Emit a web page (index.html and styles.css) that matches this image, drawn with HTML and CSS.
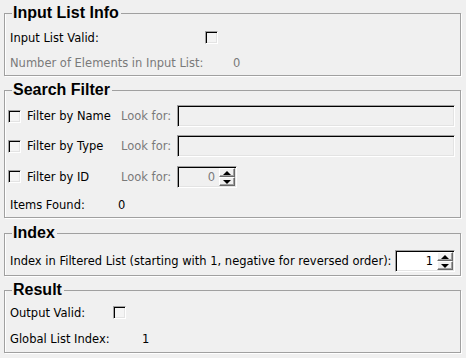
FILE: index.html
```html
<!DOCTYPE html>
<html lang="en">
<head>
    <meta charset="UTF-8">
    <title>List Element Selector</title>
    <link rel="stylesheet" href="styles.css">
</head>
<body>
    <fieldset class="group info">
        <legend>Input List Info</legend>
        <div class="row">
            <span class="label w195">Input List Valid:</span>
            <span class="check"></span>
        </div>
        <div class="row disabled">
            <span class="label w223">Number of Elements in Input List:</span>
            <span class="value">0</span>
        </div>
    </fieldset>

    <fieldset class="group filter">
        <legend>Search Filter</legend>
        <div class="row tight">
            <span class="check"></span>
            <span class="filter-name">Filter by Name</span>
            <span class="look">Look for:</span>
            <span class="field"></span>
        </div>
        <div class="row tight">
            <span class="check"></span>
            <span class="filter-name">Filter by Type</span>
            <span class="look">Look for:</span>
            <span class="field"></span>
        </div>
        <div class="row tight id-row">
            <span class="check"></span>
            <span class="filter-name">Filter by ID</span>
            <span class="look">Look for:</span>
            <div class="spin off">
                <span class="spin-val">0</span>
                <div class="spin-btns">
                    <span class="btn up"></span>
                    <span class="btn down"></span>
                </div>
            </div>
        </div>
        <div class="row found">
            <span class="label w108">Items Found:</span>
            <span class="value">0</span>
        </div>
    </fieldset>

    <fieldset class="group index">
        <legend>Index</legend>
        <div class="row">
            <span class="label">Index in Filtered List (starting with 1, negative for reversed order):</span>
            <div class="spin push">
                <span class="spin-val">1</span>
                <div class="spin-btns">
                    <span class="btn up"></span>
                    <span class="btn down"></span>
                </div>
            </div>
        </div>
    </fieldset>

    <fieldset class="group result">
        <legend>Result</legend>
        <div class="row first">
            <span class="label w103">Output Valid:</span>
            <span class="check"></span>
        </div>
        <div class="row">
            <span class="label w132">Global List Index:</span>
            <span class="value">1</span>
        </div>
    </fieldset>
</body>
</html>
```

FILE: styles.css
```css
html, body {
    margin: 0;
    background: #f0f0f0;
}
body {
    padding: 4px 5px 0 4px;
    font-family: "DejaVu Sans", Verdana, sans-serif;
    font-size: 11.5px;
    color: #000;
}
.group {
    margin: 0 0 5px 0;
    padding: 0 5px;
    border: 1px solid #a0a0a0;
    box-shadow: 1px 1px 0 #fff, inset 1px 0 0 #fff;
    min-width: 0;
}
.group legend {
    margin-left: 2px;
    padding: 0 2px 0 1px;
    font-family: "Liberation Sans", Arial, sans-serif;
    font-weight: bold;
    font-size: 16px;
    line-height: 18px;
}
.row {
    display: flex;
    align-items: center;
    line-height: 14px;
    white-space: nowrap;
}
.label {
    flex: none;
}
.w195 { width: 195px; }
.w223 { width: 223px; }
.w108 { width: 108px; }
.w103 { width: 103px; }
.w132 { width: 132px; }
.disabled, .look {
    color: #7a7a7a;
}

/* group specific rows */
.info { padding-top: 3px; }
.info .row { height: 25px; }

.filter { padding-top: 2px; margin-bottom: 6px; }
.filter .row { height: 30px; }
.filter .tight { margin-left: -2px; }
.filter .id-row { height: 31px; }
.filter .found { height: 25px; }

.index { padding-top: 4px; }
.index .row { height: 29px; }

.result .row { height: 26px; }
.result .first { height: 27px; }

/* controls */
.check {
    flex: none;
    box-sizing: border-box;
    width: 13px;
    height: 13px;
    border: 1px solid;
    border-color: #a0a0a0 #fff #fff #a0a0a0;
    box-shadow: inset 1px 1px 0 #000, inset -1px -1px 0 #e3e3e3;
    background: #f4f4f4;
}
.filter-name {
    width: 94px;
    margin-left: 6px;
}
.look {
    width: 56px;
}
.field, .spin {
    box-sizing: border-box;
    height: 22px;
    border: 1px solid;
    border-color: #a0a0a0 #fff #fff #a0a0a0;
    box-shadow: inset 1px 1px 0 #000, inset -1px -1px 0 #e3e3e3;
    background: #f0f0f0;
}
.field {
    flex: 1;
}
.spin {
    width: 60px;
    flex: none;
    display: flex;
    padding: 1px;
    background: #fff;
}
.spin.off {
    background: #f0f0f0;
    color: #7a7a7a;
}
.push {
    margin-left: auto;
}
.spin-val {
    flex: 1;
    text-align: right;
    padding-right: 4px;
    line-height: 18px;
}
.spin-btns {
    display: flex;
    flex-direction: column;
    width: 16px;
}
.btn {
    flex: 1;
    position: relative;
    box-sizing: border-box;
    background: #f0f0f0;
    border: 1px solid;
    border-color: #fff #696969 #696969 #fff;
    box-shadow: inset -1px -1px 0 #a0a0a0;
}
.btn::after {
    content: "";
    position: absolute;
    left: 3px;
    border-left: 4px solid transparent;
    border-right: 4px solid transparent;
}
.up::after {
    top: 2px;
    border-bottom: 4px solid #000;
}
.down::after {
    top: 2px;
    border-top: 4px solid #000;
}
```
